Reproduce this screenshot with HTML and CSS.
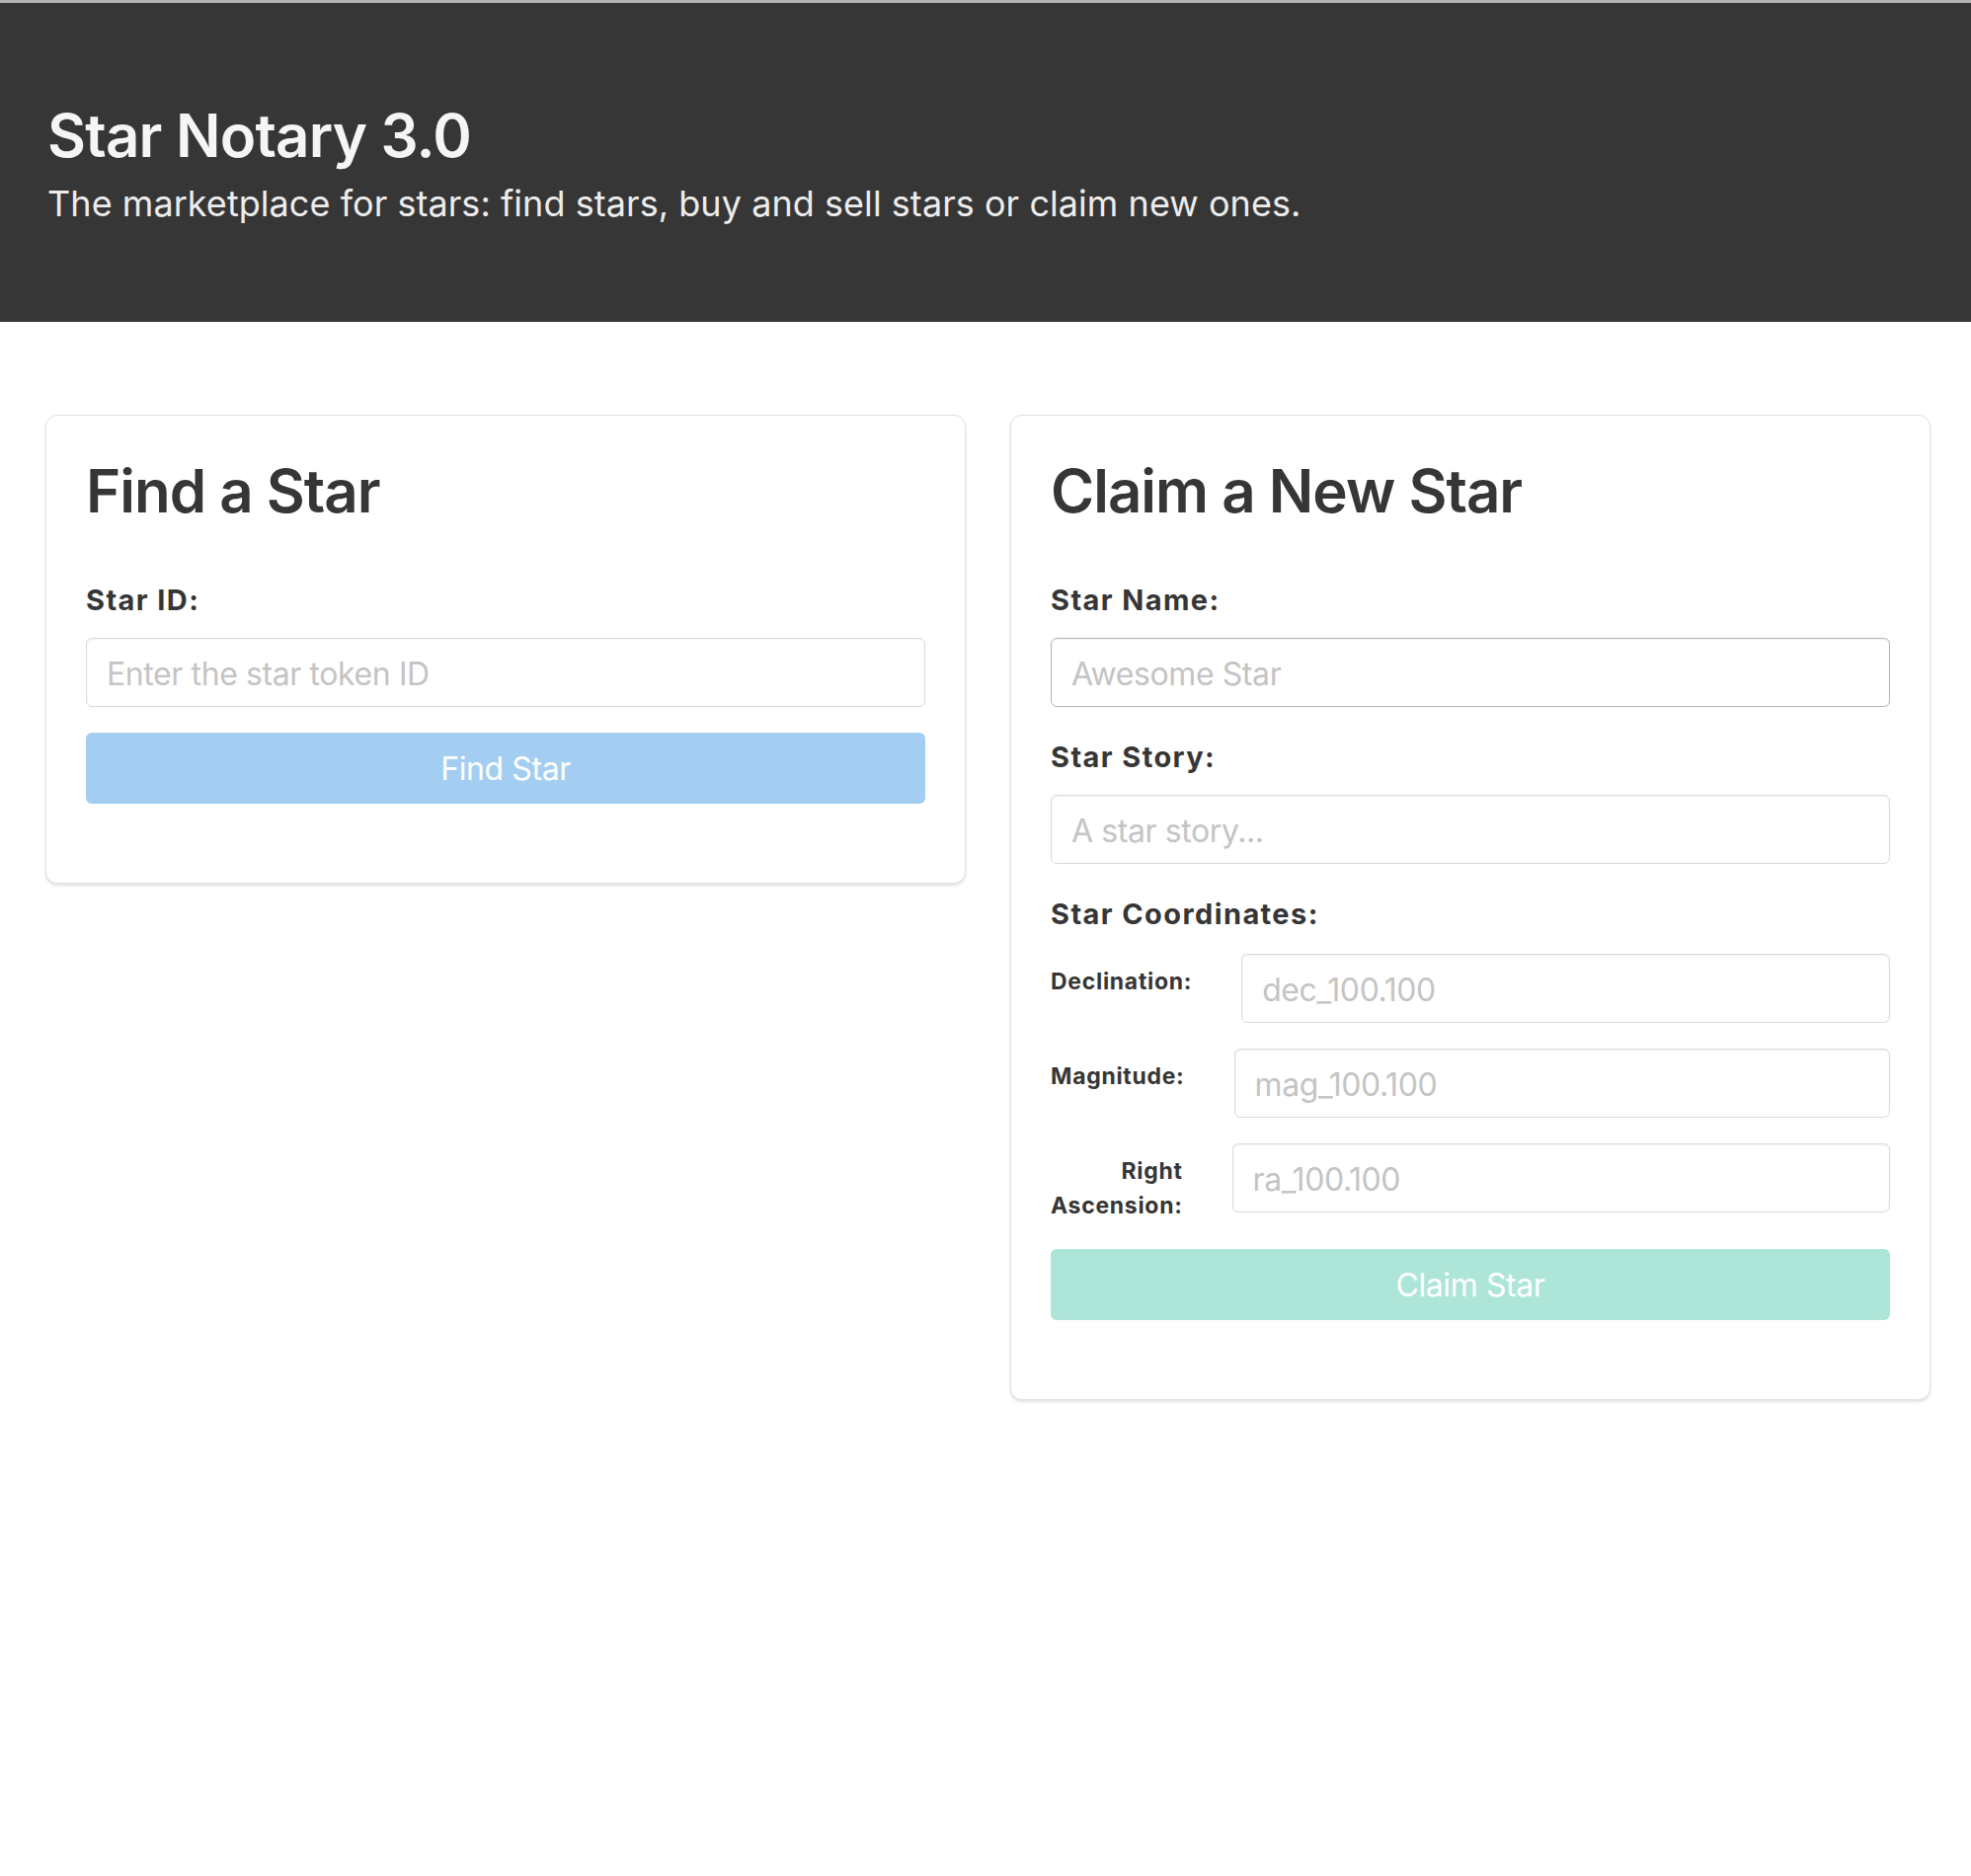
FILE: index.html
```html
<!DOCTYPE html>
<html lang="en">
<head>
<meta charset="utf-8">
<title>Star Notary 3.0</title>
<link rel="stylesheet" href="styles.css">
</head>
<body>
<header class="hero">
  <h1 class="hero-title">Star Notary 3.0</h1>
  <p class="hero-subtitle">The marketplace for stars: find stars, buy and sell stars or claim new ones.</p>
</header>
<main class="panels">
  <section class="card">
    <h2 class="card-title">Find a Star</h2>
    <label class="field-label" for="starId">Star ID:</label>
    <input class="field-input field-input-last" id="starId" type="text" placeholder="Enter the star token ID">
    <button class="btn btn-blue" type="button">Find Star</button>
  </section>
  <section class="card">
    <h2 class="card-title">Claim a New Star</h2>
    <label class="field-label" for="starName">Star Name:</label>
    <input class="field-input field-input-active" id="starName" type="text" placeholder="Awesome Star">
    <label class="field-label" for="starStory">Star Story:</label>
    <input class="field-input" id="starStory" type="text" placeholder="A star story...">
    <label class="field-label field-label-group">Star Coordinates:</label>
    <div class="coord-row">
      <label class="coord-label" for="dec">Declination:</label>
      <input class="field-input coord-input" id="dec" type="text" placeholder="dec_100.100">
    </div>
    <div class="coord-row">
      <label class="coord-label" for="mag">Magnitude:</label>
      <input class="field-input coord-input" id="mag" type="text" placeholder="mag_100.100">
    </div>
    <div class="coord-row">
      <label class="coord-label coord-label-wrap" for="ra">Right Ascension:</label>
      <input class="field-input coord-input" id="ra" type="text" placeholder="ra_100.100">
    </div>
    <button class="btn btn-mint" type="button">Claim Star</button>
  </section>
</main>
</body>
</html>
```
FILE: styles.css
```css
* { box-sizing: border-box; }

html, body {
  margin: 0;
  padding: 0;
  background: #ffffff;
}

body {
  font-family: Inter, "Noto Sans", "Liberation Sans", sans-serif;
  color: #363636;
  min-height: 1900px;
}

.hero {
  background: #363636;
  border-top: 3px solid #b4b4b4;
  padding: 98px 48px 93px;
}

.hero-title {
  margin: 0 0 6px;
  font-size: 60px;
  line-height: 72px;
  font-weight: 600;
  color: #f5f5f5;
  letter-spacing: -0.8px;
}

.hero-subtitle {
  margin: 0;
  font-size: 36px;
  line-height: 54px;
  font-weight: 400;
  color: #ececec;
  letter-spacing: 0.05px;
}

.panels {
  display: grid;
  grid-template-columns: 1fr 1fr;
  gap: 45px;
  align-items: start;
  padding: 94px 41px 0 46px;
}

.card {
  display: flex;
  flex-direction: column;
  border: 1px solid #e2e2e2;
  border-radius: 12px;
  box-shadow: 0 2px 3px rgba(0, 0, 0, 0.12);
  padding: 40px 40px 80px;
  background: #fff;
}

.card-title {
  margin: 0 0 54px;
  font-size: 60px;
  line-height: 72px;
  font-weight: 600;
  color: #363636;
  letter-spacing: -1px;
}

.field-label {
  display: block;
  margin: 0 0 17px;
  font-size: 29px;
  line-height: 42px;
  font-weight: 700;
  color: #363636;
  letter-spacing: 1.4px;
}

.field-label-group {
  margin-bottom: 19px;
}

.field-input {
  display: block;
  width: 100%;
  height: 70px;
  margin: 0 0 30px;
  padding: 3px 20px 0;
  font-family: inherit;
  font-size: 32px;
  letter-spacing: -0.4px;
  color: #363636;
  background: #fff;
  border: 1px solid #dbdbdb;
  border-radius: 6px;
  box-shadow: inset 0 1px 2px rgba(0, 0, 0, 0.06);
  outline: none;
}

.field-input::placeholder {
  color: #c4c4c4;
}

.field-input-active {
  border-color: #b5b5b5;
}

.field-input-last {
  margin-bottom: 26px;
}

.coord-row {
  display: flex;
  align-items: flex-start;
  margin: 0 0 26px;
}

.coord-label {
  flex: none;
  margin-right: 50px;
  padding: 11px 0 0;
  font-size: 23px;
  line-height: 35px;
  font-weight: 700;
  color: #363636;
  text-align: right;
  letter-spacing: 0.7px;
}

.coord-label-wrap {
  width: min-content;
}

.coord-input {
  flex: 1;
  width: auto;
  min-width: 0;
  margin: 0;
}

.btn {
  display: block;
  width: 100%;
  height: 72px;
  margin: 0;
  padding: 0;
  border: none;
  border-radius: 6px;
  font-family: inherit;
  font-size: 32px;
  font-weight: 400;
  letter-spacing: -0.4px;
  color: #ffffff;
  cursor: pointer;
}

.btn-blue {
  background: #a3cef2;
}

.btn-mint {
  background: #ade6d8;
}
```
